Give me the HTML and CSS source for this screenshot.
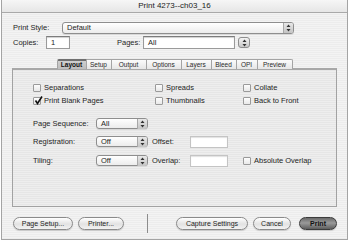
FILE: index.html
```html
<!DOCTYPE html>
<html lang="en">
<head>
    <meta charset="UTF-8">
    <title>Print 4273--ch03_16</title>
    <link rel="stylesheet" href="styles.css">
</head>
<body>
    <div class="window">
        <div class="titlebar">Print 4273--ch03_16</div>

        <div class="content">
            <div class="row style-row">
                <span class="label style-label">Print Style:</span>
                <div class="select style-select">
                    <span class="select-text">Default</span>
                    <span class="arrows"><svg width="5" height="8" viewBox="0 0 5 8"><path d="M2.5 0.5 L4.5 3 L0.5 3 Z M2.5 7.5 L4.5 5 L0.5 5 Z" fill="#333"/></svg></span>
                </div>
            </div>

            <div class="row copies-row">
                <span class="label copies-label">Copies:</span>
                <div class="field copies-field">1</div>
                <span class="label pages-label">Pages:</span>
                <div class="field pages-field">All</div>
                <span class="stepper"><svg width="5" height="8" viewBox="0 0 5 8"><path d="M2.5 0.5 L4.5 3 L0.5 3 Z M2.5 7.5 L4.5 5 L0.5 5 Z" fill="#333"/></svg></span>
            </div>

            <div class="tabs">
                <div class="tab active tab-layout">Layout</div>
                <div class="tab tab-setup">Setup</div>
                <div class="tab tab-output">Output</div>
                <div class="tab tab-options">Options</div>
                <div class="tab tab-layers">Layers</div>
                <div class="tab tab-bleed">Bleed</div>
                <div class="tab tab-opi">OPI</div>
                <div class="tab tab-preview">Preview</div>
            </div>

            <div class="panel">
                <div class="checks">
                    <label class="check"><span class="box"></span>Separations</label>
                    <label class="check"><span class="box"></span>Spreads</label>
                    <label class="check"><span class="box"></span>Collate</label>
                    <label class="check"><span class="box checked"><svg width="9" height="9" viewBox="0 0 9 9"><path d="M1.5 4.5 L3.5 7.5 L8 0.5" fill="none" stroke="#111" stroke-width="1.6"/></svg></span>Print Blank Pages</label>
                    <label class="check"><span class="box"></span>Thumbnails</label>
                    <label class="check"><span class="box"></span>Back to Front</label>
                </div>

                <div class="prow seq-row">
                    <span class="plabel">Page Sequence:</span>
                    <div class="select small-select">
                        <span class="select-text">All</span>
                        <span class="arrows"><svg width="5" height="8" viewBox="0 0 5 8"><path d="M2.5 0.5 L4.5 3 L0.5 3 Z M2.5 7.5 L4.5 5 L0.5 5 Z" fill="#333"/></svg></span>
                    </div>
                </div>

                <div class="prow reg-row">
                    <span class="plabel">Registration:</span>
                    <div class="select small-select">
                        <span class="select-text">Off</span>
                        <span class="arrows"><svg width="5" height="8" viewBox="0 0 5 8"><path d="M2.5 0.5 L4.5 3 L0.5 3 Z M2.5 7.5 L4.5 5 L0.5 5 Z" fill="#333"/></svg></span>
                    </div>
                    <span class="flabel">Offset:</span>
                    <div class="field num-field"></div>
                </div>

                <div class="prow tiling-row">
                    <span class="plabel">Tiling:</span>
                    <div class="select small-select">
                        <span class="select-text">Off</span>
                        <span class="arrows"><svg width="5" height="8" viewBox="0 0 5 8"><path d="M2.5 0.5 L4.5 3 L0.5 3 Z M2.5 7.5 L4.5 5 L0.5 5 Z" fill="#333"/></svg></span>
                    </div>
                    <span class="flabel">Overlap:</span>
                    <div class="field num-field"></div>
                    <label class="check abs-check"><span class="box"></span>Absolute Overlap</label>
                </div>
            </div>

            <div class="footer">
                <button class="btn btn-setup">Page Setup...</button>
                <button class="btn btn-printer">Printer...</button>
                <span class="separator"></span>
                <button class="btn btn-capture">Capture Settings</button>
                <button class="btn btn-cancel">Cancel</button>
                <button class="btn btn-print">Print</button>
            </div>
        </div>
    </div>
</body>
</html>
```

FILE: styles.css
```css
* {
    margin: 0;
    padding: 0;
    box-sizing: border-box;
    font-family: 'Liberation Sans', Arial, sans-serif;
}

body {
    background: #ffffff;
    color: #1e1e1e;
    font-size: 7.5px;
}

.window {
    width: 347px;
    height: 240px;
    margin-left: 1px;
    border: 1px solid #a4a4a4;
    border-top: none;
    background: repeating-linear-gradient(#ececec 0 1px, #f3f3f3 1px 2px);
}

.titlebar {
    height: 13px;
    line-height: 12px;
    text-align: center;
    font-size: 8px;
    color: #222;
    background: linear-gradient(#f6f6f6, #e6e6e6);
    border-bottom: 1px solid #a9a9a9;
}

.content {
    padding: 0 10px;
}

.row {
    display: flex;
    align-items: center;
    height: 13px;
}

.label {
    padding-left: 1px;
}

.style-row {
    margin-top: 8px;
}

.style-label {
    width: 50px;
}

.copies-row {
    margin-top: 2px;
}

.copies-label {
    width: 34px;
}

.pages-label {
    width: 27px;
    margin-left: 46px;
}

/* select boxes */
.select {
    display: flex;
    align-items: center;
    height: 12px;
    border: 1px solid #8e8e8e;
    border-radius: 3px;
    background: linear-gradient(#ffffff, #ececec);
    box-shadow: 0 1px 0 #d8d8d8;
}

.select-text {
    flex: 1;
    padding-left: 4px;
    line-height: 10px;
}

.arrows {
    display: flex;
    align-items: center;
    justify-content: center;
    width: 10px;
    height: 10px;
    border-left: 1px solid #a8a8a8;
    background: linear-gradient(#e8e8e8, #c4c4c4);
    border-radius: 0 2px 2px 0;
}

.style-select {
    width: 232px;
}

.small-select {
    width: 52px;
    height: 11px;
}

.stepper {
    display: flex;
    align-items: center;
    justify-content: center;
    width: 12px;
    height: 11px;
    margin-left: 3px;
    border: 1px solid #8e8e8e;
    border-radius: 3px;
    background: linear-gradient(#f4f4f4, #c8c8c8);
}

/* text fields */
.field {
    height: 13px;
    line-height: 11px;
    padding-left: 4px;
    background: #fff;
    border: 1px solid #9a9a9a;
    border-top-color: #7c7c7c;
    box-shadow: inset 0 1px 1px #cfcfcf;
}

.copies-field {
    width: 24px;
}

.pages-field {
    width: 92px;
}

.num-field {
    width: 38px;
    height: 12px;
    border-color: #c4c4c4;
    box-shadow: inset 0 1px 1px #e2e2e2;
}

/* tabs */
.tabs {
    display: flex;
    justify-content: center;
    height: 10px;
    margin-top: 10px;
    position: relative;
    z-index: 1;
}

.tab {
    height: 10px;
    line-height: 9px;
    text-align: center;
    font-size: 6.5px;
    color: #2a2a2a;
    white-space: nowrap;
    overflow: hidden;
    background: linear-gradient(#fbfbfb, #e6e6e6);
    border: 1px solid #a4a4a4;
    border-left: none;
    border-bottom: none;
}

.tab:first-child {
    border-left: 1px solid #a4a4a4;
    border-radius: 2px 0 0 0;
}

.tab:last-child {
    border-radius: 0 2px 0 0;
}

.tab.active {
    background: linear-gradient(#cfcfcf, #bdbdbd);
    border-top: 2px solid #6f6f6f;
    line-height: 8px;
    font-weight: bold;
    color: #111;
}

.tab-layout { width: 30px; }
.tab-setup { width: 25px; }
.tab-output { width: 35px; }
.tab-options { width: 35px; }
.tab-layers { width: 30px; }
.tab-bleed { width: 25px; }
.tab-opi { width: 21px; }
.tab-preview { width: 35px; }

/* panel */
.panel {
    height: 139px;
    margin-top: -1px;
    padding: 11px 0 0 20px;
    border: 1px solid #a2a2a2;
    border-top: 2px solid #a8a8a8;
    background: repeating-linear-gradient(#e6e6e6 0 1px, #eeeeee 1px 2px);
}

.checks {
    display: grid;
    grid-template-columns: 122px 88px 1fr;
    grid-auto-rows: 13px;
    align-items: center;
}

.check {
    display: flex;
    align-items: center;
}

.box {
    position: relative;
    width: 8px;
    height: 8px;
    margin-right: 3px;
    background: linear-gradient(#fdfdfd, #e8e8e8);
    border: 1px solid #9a9a9a;
    border-radius: 1px;
}

.box svg {
    position: absolute;
    left: 0;
    top: -2px;
}

.prow {
    display: flex;
    align-items: center;
    height: 13px;
}

.seq-row {
    margin-top: 10px;
}

.reg-row {
    margin-top: 5px;
}

.tiling-row {
    margin-top: 6px;
}

.plabel {
    width: 63px;
}

.flabel {
    width: 38px;
    margin-left: 4px;
}

.abs-check {
    margin-left: 15px;
}

/* footer buttons */
.footer {
    display: flex;
    align-items: center;
    height: 13px;
    margin-top: 10px;
    padding-left: 1px;
}

.btn {
    height: 13px;
    font-size: 7px;
    color: #1e1e1e;
    border: 1px solid #8a8a8a;
    border-radius: 7px;
    background: linear-gradient(#ffffff, #e2e2e2 55%, #f2f2f2);
    box-shadow: 0 1px 1px #c8c8c8;
}

.btn-setup { width: 60px; }
.btn-printer { width: 46px; margin-left: 5px; }
.btn-capture { width: 72px; }
.btn-cancel { width: 38px; margin-left: 5px; }

.btn-print {
    width: 38px;
    margin-left: 8px;
    border-color: #3c3c3c;
    color: #111;
    font-weight: bold;
    background: linear-gradient(#6a6a6a, #9a9a9a 45%, #5e5e5e);
}

.separator {
    width: 1px;
    height: 19px;
    margin: 0 28px 0 23px;
    background: #8c8c8c;
}
```
